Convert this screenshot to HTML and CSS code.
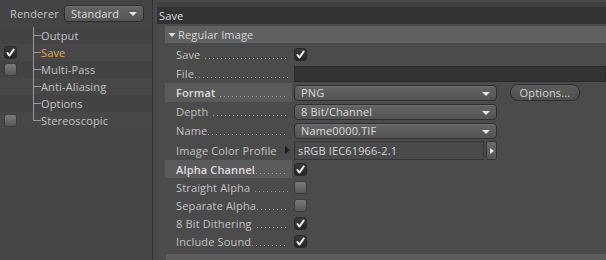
FILE: index.html
```html
<!DOCTYPE html>
<html>
<head>
<meta charset="utf-8">
<link rel="stylesheet" href="styles.css">
</head>
<body>
<div class="app">
  <aside class="left">
    <div class="renderer">
      <span class="renderer-label">Renderer</span>
      <div class="select select-small"><span>Standard</span><i class="arrow"></i></div>
    </div>
    <ul class="tree">
      <li class="node"><span class="cb-slot"></span><span class="branch"></span><span class="node-label">Output</span></li>
      <li class="node"><span class="cb-slot"><span class="cb on"><svg viewBox="0 0 12 12"><path d="M2.6 6.4 L4.8 9.4 L9.6 2.6" /></svg></span></span><span class="branch"></span><span class="node-label active">Save</span></li>
      <li class="node"><span class="cb-slot"><span class="cb off"></span></span><span class="branch"></span><span class="node-label">Multi-Pass</span></li>
      <li class="node"><span class="cb-slot"></span><span class="branch"></span><span class="node-label">Anti-Aliasing</span></li>
      <li class="node"><span class="cb-slot"></span><span class="branch"></span><span class="node-label">Options</span></li>
      <li class="node last"><span class="cb-slot"><span class="cb off"></span></span><span class="branch"></span><span class="node-label">Stereoscopic</span></li>
    </ul>
  </aside>
  <div class="split"></div>
  <main class="right">
    <div class="topstrip"></div>
    <div class="title">Save</div>
    <section class="group">
      <div class="group-head"><svg class="tri" viewBox="0 0 8 8"><path d="M0.5 2 L7.5 2 L4 6 Z"/></svg><span>Regular Image</span></div>
      <div class="rows">
        <div class="row tall">
          <div class="label"><span>Save</span><span class="dots"></span></div>
          <div class="ctl"><span class="cb on"><svg viewBox="0 0 12 12"><path d="M2.6 6.4 L4.8 9.4 L9.6 2.6" /></svg></span></div>
        </div>
        <div class="row tall">
          <div class="label"><span>File</span><span class="dots tight"></span></div>
          <div class="ctl"><div class="field file"></div></div>
        </div>
        <div class="row tall">
          <div class="label hl strong"><span>Format</span><span class="dots"></span></div>
          <div class="ctl">
            <div class="select wide"><span>PNG</span><i class="arrow"></i></div>
            <div class="button">Options...</div>
          </div>
        </div>
        <div class="row tall">
          <div class="label"><span>Depth</span><span class="dots"></span></div>
          <div class="ctl"><div class="select wide"><span>8 Bit/Channel</span><i class="arrow"></i></div></div>
        </div>
        <div class="row tall">
          <div class="label"><span>Name</span><span class="dots tight"></span></div>
          <div class="ctl"><div class="select wide"><span>Name0000.TIF</span><i class="arrow"></i></div></div>
        </div>
        <div class="row tall icp">
          <div class="label"><span>Image Color Profile</span><i class="mini-tri"></i></div>
          <div class="ctl"><div class="field profile">sRGB IEC61966-2.1</div><div class="side-btn"><i></i></div></div>
        </div>
        <div class="row">
          <div class="label hl strong"><span>Alpha Channel</span><span class="dots tight"></span></div>
          <div class="ctl"><span class="cb on"><svg viewBox="0 0 12 12"><path d="M2.6 6.4 L4.8 9.4 L9.6 2.6" /></svg></span></div>
        </div>
        <div class="row">
          <div class="label"><span>Straight Alpha</span><span class="dots"></span></div>
          <div class="ctl"><span class="cb off"></span></div>
        </div>
        <div class="row">
          <div class="label"><span>Separate Alpha</span><span class="dots tight"></span></div>
          <div class="ctl"><span class="cb off"></span></div>
        </div>
        <div class="row">
          <div class="label"><span>8 Bit Dithering</span><span class="dots"></span></div>
          <div class="ctl"><span class="cb on"><svg viewBox="0 0 12 12"><path d="M2.6 6.4 L4.8 9.4 L9.6 2.6" /></svg></span></div>
        </div>
        <div class="row">
          <div class="label"><span>Include Sound</span><span class="dots tight"></span></div>
          <div class="ctl"><span class="cb on"><svg viewBox="0 0 12 12"><path d="M2.6 6.4 L4.8 9.4 L9.6 2.6" /></svg></span></div>
        </div>
      </div>
    </section>
    <div class="bottom"></div>
  </main>
</div>
</body>
</html>
```
FILE: styles.css
```css
* { box-sizing: border-box; }
html, body {
  margin: 0;
  padding: 0;
  width: 606px;
  height: 260px;
  overflow: hidden;
  background: #4b4b4b;
  font-family: "Open Sans", "DejaVu Sans", sans-serif;
  font-size: 11px;
  letter-spacing: 0.15px;
  color: #c4c4c4;
}
.app {
  display: flex;
  height: 260px;
}
.left {
  width: 152px;
  flex: none;
  background: #464646;
}
.split {
  width: 5px;
  flex: none;
  border-left: 1px solid #333333;
  background: #484848;
}
.right {
  flex: 1;
  display: flex;
  flex-direction: column;
  background: #4b4b4b;
}

/* left panel */
.renderer {
  height: 27px;
  display: flex;
  align-items: center;
  padding-left: 10px;
  gap: 5px;
  background: #444444;
}
.renderer-label { color: #c2c2c2; }
.select {
  position: relative;
  display: flex;
  align-items: center;
  height: 16px;
  border: 1px solid #2e2e2e;
  border-radius: 4px;
  background: linear-gradient(#646464, #545454);
  color: #dcdcdc;
  padding-left: 6px;
  box-shadow: inset 0 1px 0 rgba(255,255,255,0.08);
}
.select-small {
  width: 80px;
  height: 17px;
  padding-left: 6px;
}
.arrow {
  position: absolute;
  right: 6px;
  top: 6px;
  width: 0;
  height: 0;
  border-left: 4px solid transparent;
  border-right: 4px solid transparent;
  border-top: 4px solid #e6e6e6;
}
.tree {
  list-style: none;
  margin: 0;
  padding: 0;
}
.node {
  height: 17px;
  display: flex;
  align-items: center;
}
.node:nth-child(odd) { background: #434343; }
.node:nth-child(even) { background: #474747; }
.cb-slot {
  width: 33px;
  height: 17px;
  display: flex;
  align-items: center;
  padding-left: 4px;
}
.branch {
  width: 8px;
  height: 17px;
  background:
    linear-gradient(#9a9a9a, #9a9a9a) left top / 1px 100% no-repeat,
    linear-gradient(#9a9a9a, #9a9a9a) left 8px / 8px 1px no-repeat;
}
.node.last .branch {
  background:
    linear-gradient(#9a9a9a, #9a9a9a) left top / 1px 9px no-repeat,
    linear-gradient(#9a9a9a, #9a9a9a) left 8px / 8px 1px no-repeat;
}
.node-label { color: #c4c4c4; }
.node-label.active { color: #f0a634; }

/* checkboxes */
.cb {
  display: inline-block;
  width: 13px;
  height: 13px;
  border-radius: 3px;
  border: 1px solid #2a2a2a;
}
.cb.on {
  background: linear-gradient(#3a3a3a, #262626);
}
.cb.on svg {
  display: block;
  width: 11px;
  height: 11px;
}
.cb.on path {
  fill: none;
  stroke: #f2f2f2;
  stroke-width: 2;
  stroke-linecap: round;
  stroke-linejoin: round;
}
.cb.off {
  background: linear-gradient(#7a7a7a, #585858);
  border-color: #3c3c3c;
}

/* right panel */
.topstrip {
  height: 7px;
  background: #404040;
  border-top: 2px solid #4a4a4a;
}
.title {
  height: 17px;
  line-height: 17px;
  background: #333333;
  color: #dedede;
  padding-left: 2px;
}
.group {
  margin-top: 2px;
  margin-left: 8px;
}
.group-head {
  height: 17px;
  display: flex;
  align-items: center;
  gap: 2px;
  padding-left: 3px;
  background: #606060;
  color: #d6d6d6;
}
.tri {
  width: 8px;
  height: 8px;
  fill: #e0e0e0;
}
.rows {
  margin-top: 2px;
  display: flex;
  flex-direction: column;
}
.row {
  height: 18px;
  display: flex;
  align-items: center;
}
.row.tall { height: 19px; }
.row.icp { margin-top: 1px; height: 19px; }
.label {
  width: 127px;
  height: 100%;
  display: flex;
  align-items: center;
  padding-left: 11px;
  padding-right: 4px;
  color: #c2c2c2;
  position: relative;
}
.label.hl { background: #5a5a5a; }
.label.strong { color: #dddddd; font-weight: 600; }
.dots {
  flex: 1;
  align-self: stretch;
  margin-left: 5px;
  background: linear-gradient(to right, #9c9c9c 1px, transparent 1px) left 13px / 4px 1px repeat-x;
}
.dots.tight { margin-left: 1px; }
.mini-tri {
  position: absolute;
  right: 2px;
  top: 5px;
  width: 0;
  height: 0;
  border-top: 4px solid transparent;
  border-bottom: 4px solid transparent;
  border-left: 5px solid #1e1e1e;
}
.ctl {
  flex: 1;
  height: 100%;
  display: flex;
  align-items: center;
  padding-left: 2px;
}
.field {
  background: #333333;
  border: 1px solid #2a2a2a;
}
.field.file {
  width: 100%;
  height: 16px;
}
.field.profile {
  width: 190px;
  height: 19px;
  background: #4a4a4a;
  border-color: #353535;
  color: #d6d6d6;
  padding-left: 3px;
  display: flex;
  align-items: center;
}
.side-btn {
  position: relative;
  margin-left: 2px;
  width: 11px;
  height: 19px;
  border: 1px solid #333333;
  border-radius: 2px;
  background: linear-gradient(#6a6a6a, #555555);
}
.side-btn i {
  position: absolute;
  left: 3px;
  top: 6px;
  width: 0;
  height: 0;
  border-top: 3px solid transparent;
  border-bottom: 3px solid transparent;
  border-left: 4px solid #e6e6e6;
}
.select.wide {
  width: 203px;
  height: 16px;
}
.button {
  margin-left: 13px;
  width: 70px;
  height: 17px;
  border: 1px solid #2e2e2e;
  border-radius: 8px;
  background: linear-gradient(#5c5c5c, #4f4f4f);
  color: #d4d4d4;
  display: flex;
  align-items: center;
  justify-content: center;
}
.bottom {
  margin-top: auto;
  margin-left: 9px;
  height: 6px;
  background: #5c5c5c;
}
```
